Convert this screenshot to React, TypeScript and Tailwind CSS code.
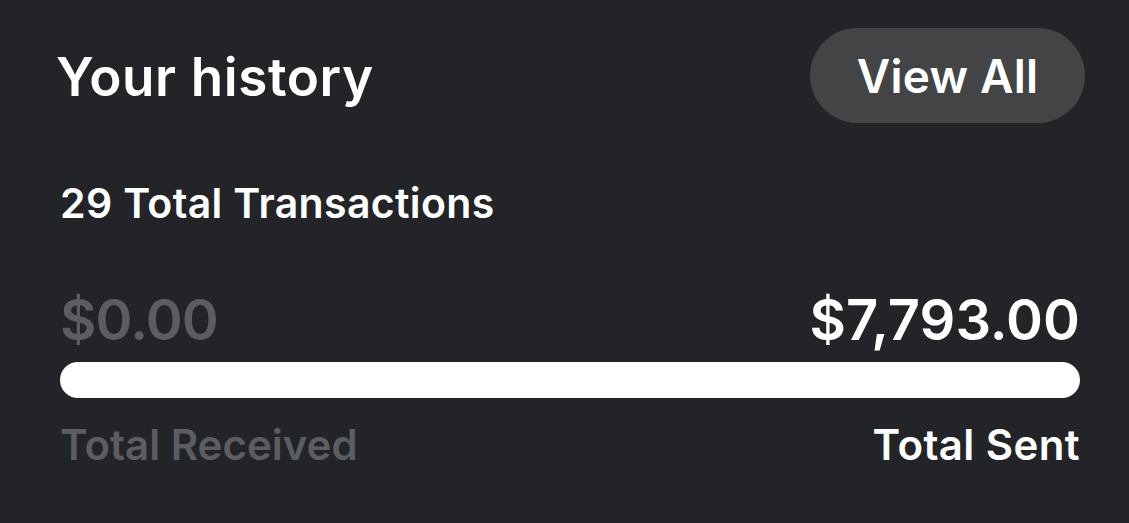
export default function App() {
  return (
    <div
      className="w-[1129px] h-[523px] bg-[#232427] text-white overflow-hidden"
      style={{ fontFamily: "Inter, 'Noto Sans', sans-serif" }}
    >
      <div className="pl-[56px] pr-[44px] pt-[28px] flex items-center justify-between">
        <h1 className="text-[53px] font-semibold leading-none tracking-[0.6px] mt-[4px]">Your history</h1>
        <button className="w-[275px] h-[95px] rounded-full bg-[#434446] text-[46px] font-semibold leading-none text-white tracking-[0.2px]">
          View All
        </button>
      </div>
      <div className="pl-[60px] pt-[60px] text-[41px] font-semibold leading-none tracking-[0.35px]">29 Total Transactions</div>
      <div className="pl-[60px] pr-[49px] pt-[68px]">
        <div className="flex justify-between items-end text-[56px] font-semibold leading-none">
          <span className="text-[#5c5d60] tracking-[-0.8px]">$0.00</span>
          <span>$7,793.00</span>
        </div>
        <div className="mt-[14px] h-[36px] rounded-full bg-white" />
        <div className="mt-[26px] flex justify-between text-[42px] font-semibold leading-none">
          <span className="text-[#5c5d60]">Total Received</span>
          <span className="tracking-[0.4px]">Total Sent</span>
        </div>
      </div>
    </div>
  );
}
